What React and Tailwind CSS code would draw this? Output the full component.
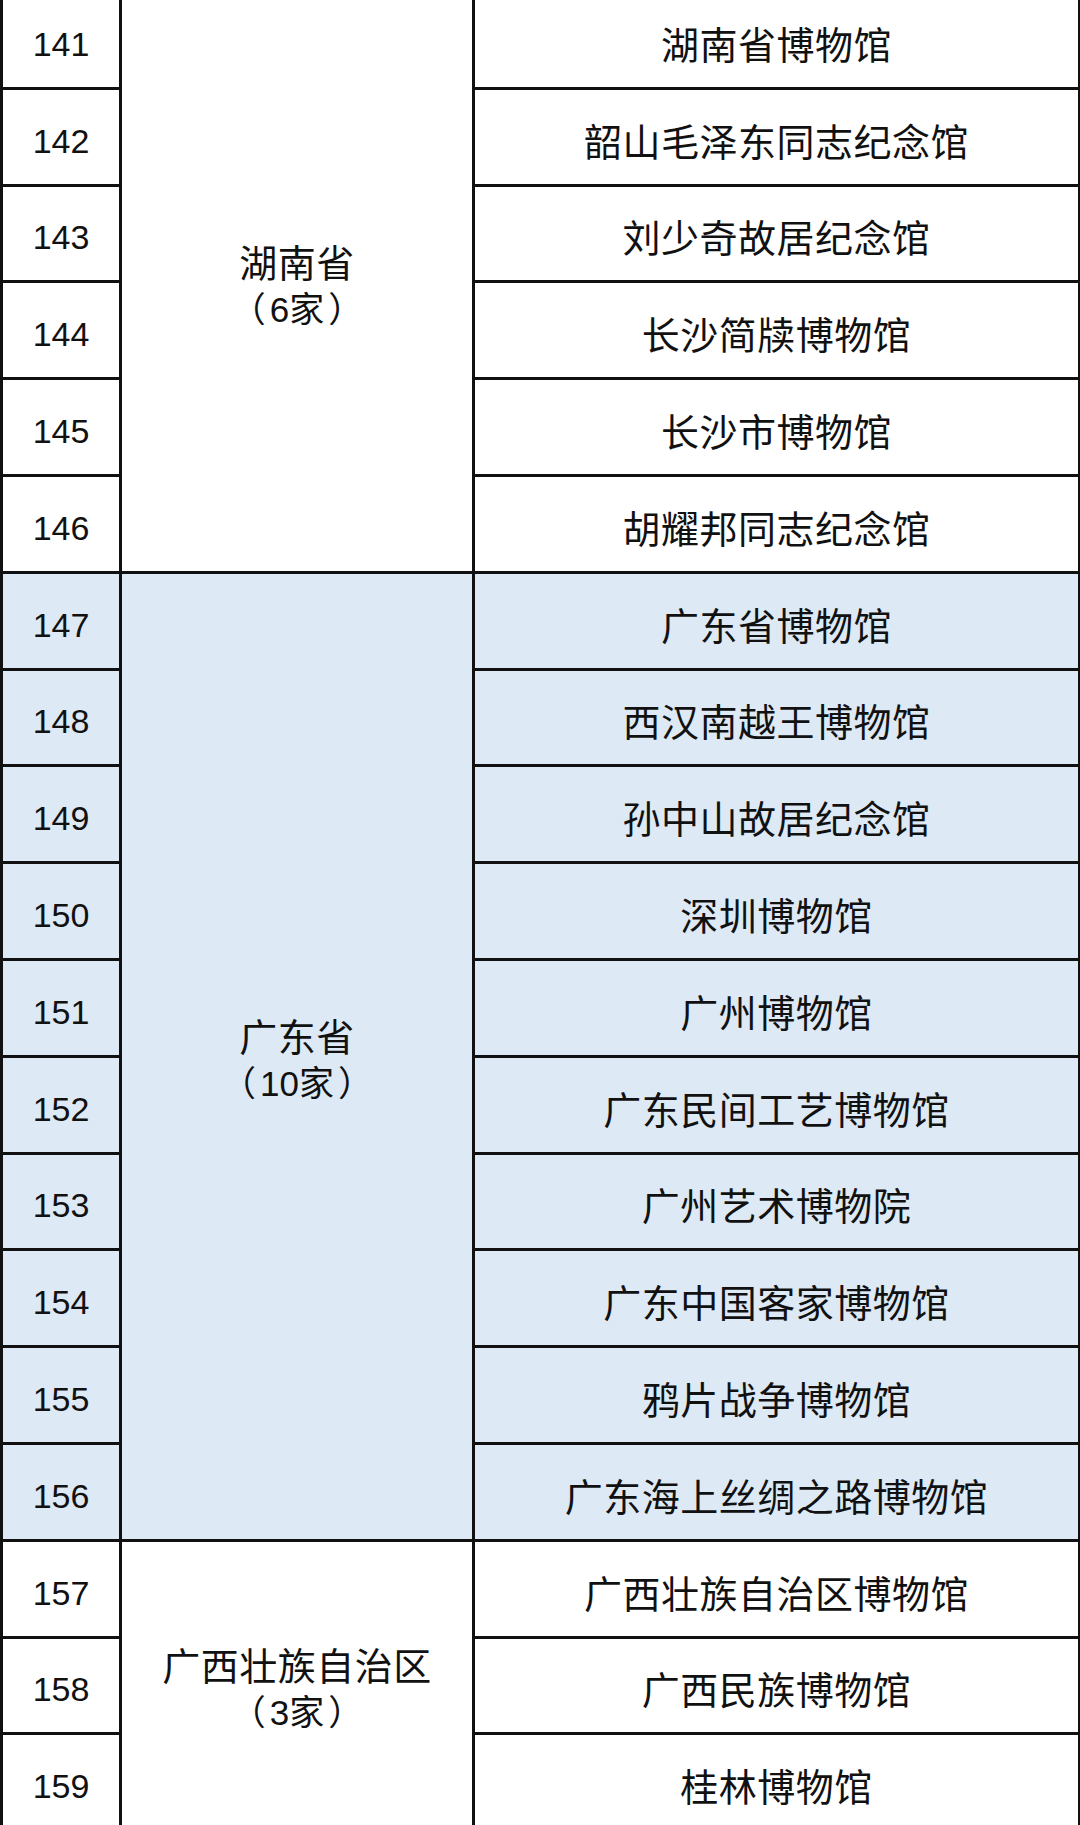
import React from "react";

const groups = [
  {
    name: "湖南省",
    count: "6家",
    blue: false,
    items: [
      ["141", "湖南省博物馆"],
      ["142", "韶山毛泽东同志纪念馆"],
      ["143", "刘少奇故居纪念馆"],
      ["144", "长沙简牍博物馆"],
      ["145", "长沙市博物馆"],
      ["146", "胡耀邦同志纪念馆"],
    ],
  },
  {
    name: "广东省",
    count: "10家",
    blue: true,
    items: [
      ["147", "广东省博物馆"],
      ["148", "西汉南越王博物馆"],
      ["149", "孙中山故居纪念馆"],
      ["150", "深圳博物馆"],
      ["151", "广州博物馆"],
      ["152", "广东民间工艺博物馆"],
      ["153", "广州艺术博物院"],
      ["154", "广东中国客家博物馆"],
      ["155", "鸦片战争博物馆"],
      ["156", "广东海上丝绸之路博物馆"],
    ],
  },
  {
    name: "广西壮族自治区",
    count: "3家",
    blue: false,
    items: [
      ["157", "广西壮族自治区博物馆"],
      ["158", "广西民族博物馆"],
      ["159", "桂林博物馆"],
    ],
  },
];

function Group({ g }) {
  const bg = g.blue ? "bg-[#dde9f5]" : "bg-white";
  return (
    <div className="grid grid-cols-[116px_350px_1fr] gap-[3px]">
      <div className="flex flex-col gap-[3px]">
        {g.items.map(([num]) => (
          <div
            key={num}
            className={`${bg} h-[93.8px] pt-[9px] flex items-center justify-center text-[34px] text-[#111]`}
          >
            {num}
          </div>
        ))}
      </div>
      <div className={`${bg} pt-[10px] flex flex-col items-center justify-center text-[#111]`}>
        <div className="text-[38px] leading-[46px] tracking-[0.5px]">{g.name}</div>
        <div className="text-[35px] leading-[46px] flex">
          <span>（</span>
          <span className="mx-[4px]">{g.count}</span>
          <span>）</span>
        </div>
      </div>
      <div className="flex flex-col gap-[3px]">
        {g.items.map(([num, name]) => (
          <div
            key={num}
            className={`${bg} h-[93.8px] pt-[13px] flex items-center justify-center text-[38px] tracking-[0.5px] text-[#111]`}
          >
            {name}
          </div>
        ))}
      </div>
    </div>
  );
}

export default function App() {
  return (
    <div className="w-[1080px] h-[1825px] overflow-hidden bg-white font-['Liberation_Sans','Noto_Sans_CJK_SC',sans-serif]">
      <div className="mt-[-7px] bg-[#111] pl-[3px] pr-[2px] flex flex-col gap-[3px]">
        {groups.map((g) => (
          <Group key={g.name} g={g} />
        ))}
      </div>
    </div>
  );
}
